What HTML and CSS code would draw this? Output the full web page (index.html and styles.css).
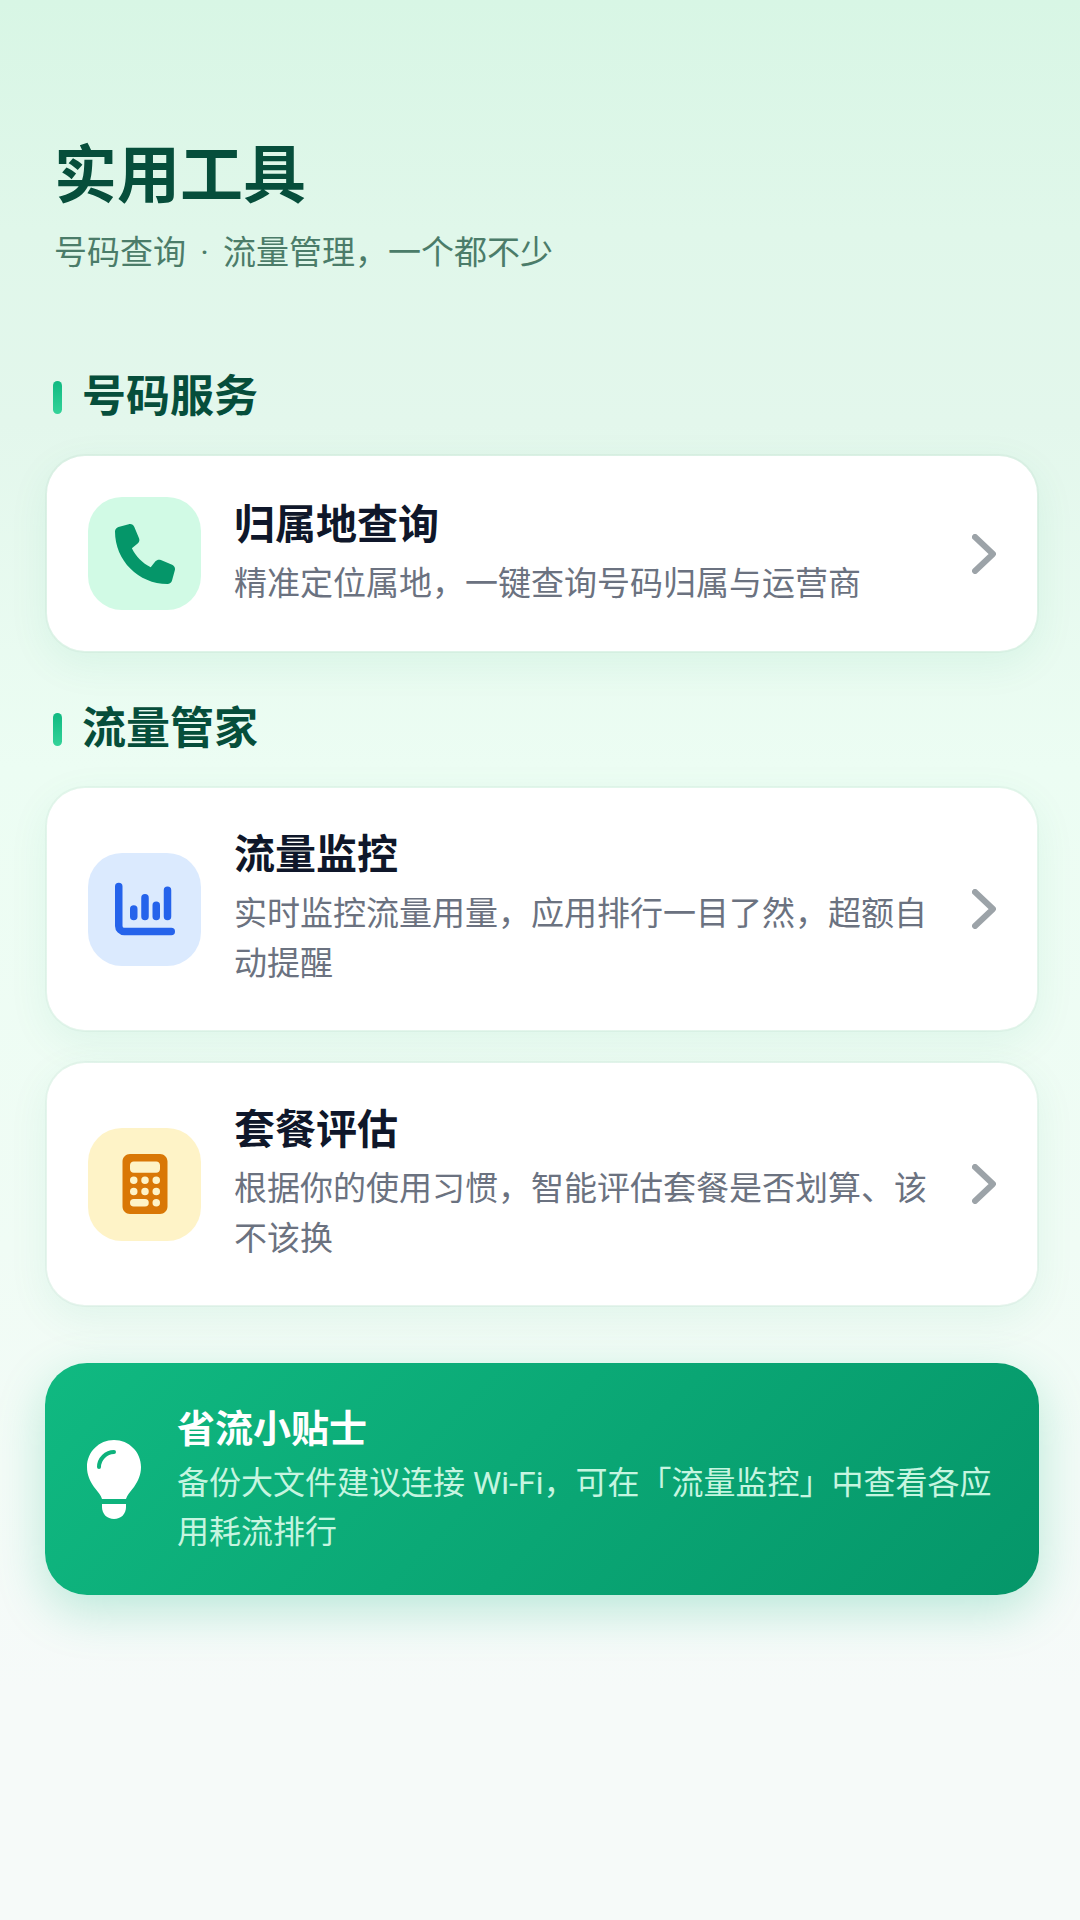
FILE: index.html
```html
<!DOCTYPE html>
<html lang="zh-CN">
<head>
  <meta charset="UTF-8" />
  <meta name="viewport" content="width=device-width, initial-scale=1.0" />
  <title>实用工具</title>
  <link rel="stylesheet" href="styles.css">
</head>
<body>
  <main class="page">
    <header class="page-header">
      <h1>实用工具</h1>
      <p>号码查询 <span class="dot">·</span> 流量管理，一个都不少</p>
    </header>

    <section class="group">
      <h2>号码服务</h2>
      <a class="card" href="#location">
        <span class="card-icon green">
          <svg viewBox="0 0 512 512" fill="currentColor" aria-hidden="true">
            <path d="M164.900 24.600c-7.700-18.600-28-28.500-47.400-23.200l-88 24C12.100 30.200 0 46 0 64c0 247.400 200.600 448 448 448 18 0 33.800-12.100 38.600-29.500l24-88c5.300-19.400-4.600-39.700-23.200-47.400l-96-40c-16.300-6.800-35.200-2.100-46.300 11.600L304.700 368C234.300 334.700 177.300 277.700 144 207.300L193.300 167c13.700-11.200 18.400-30 11.600-46.300l-40-96z"/>
          </svg>
        </span>
        <span class="card-text">
          <strong>归属地查询</strong>
          <span>精准定位属地，一键查询号码归属与运营商</span>
        </span>
        <svg class="arrow" viewBox="0 0 24 40" aria-hidden="true"><path d="M3 3l18 17L3 37"/></svg>
      </a>
    </section>

    <section class="group">
      <h2>流量管家</h2>
      <a class="card" href="#monitor">
        <span class="card-icon blue">
          <svg viewBox="0 0 512 512" fill="none" stroke="currentColor" stroke-width="64" stroke-linecap="round" aria-hidden="true">
            <path d="M32 64v336c0 26 22 48 48 48h400"/>
            <path d="M160 256v64M256 160v160M352 224v96M448 96v224"/>
          </svg>
        </span>
        <span class="card-text">
          <strong>流量监控</strong>
          <span>实时监控流量用量，应用排行一目了然，超额自动提醒</span>
        </span>
        <svg class="arrow" viewBox="0 0 24 40" aria-hidden="true"><path d="M3 3l18 17L3 37"/></svg>
      </a>
      <a class="card" href="#plan">
        <span class="card-icon amber">
          <svg viewBox="0 0 512 512" fill="currentColor" aria-hidden="true">
            <path fill-rule="evenodd" d="M128 0h256c35 0 64 29 64 64v384c0 35-29 64-64 64H128c-35 0-64-29-64-64V64c0-35 29-64 64-64zM160 64c-18 0-32 14-32 32v32c0 18 14 32 32 32h192c18 0 32-14 32-32V96c0-18-14-32-32-32zM160 192a32 32 0 1 0 0 64 32 32 0 1 0 0-64zM256 192a32 32 0 1 0 0 64 32 32 0 1 0 0-64zM352 192a32 32 0 1 0 0 64 32 32 0 1 0 0-64zM160 288a32 32 0 1 0 0 64 32 32 0 1 0 0-64zM256 288a32 32 0 1 0 0 64 32 32 0 1 0 0-64zM352 288a32 32 0 1 0 0 64 32 32 0 1 0 0-64zM352 384a32 32 0 1 0 0 64 32 32 0 1 0 0-64zM160 384a32 32 0 0 0 0 64h96a32 32 0 0 0 0-64z"/>
          </svg>
        </span>
        <span class="card-text">
          <strong>套餐评估</strong>
          <span>根据你的使用习惯，智能评估套餐是否划算、该不该换</span>
        </span>
        <svg class="arrow" viewBox="0 0 24 40" aria-hidden="true"><path d="M3 3l18 17L3 37"/></svg>
      </a>
    </section>

    <aside class="tip">
      <svg class="bulb" viewBox="0 0 54 79" aria-hidden="true">
        <path fill="#fff" d="M27 0C12 0 0 12 0 27c0 8 3 14 7 20 4 5 7 8 8 12h24c1-4 4-7 8-12 4-6 7-12 7-20C54 12 42 0 27 0z"/>
        <path fill="#fff" d="M15 64h24v3c0 7-5 12-12 12s-12-5-12-12z"/>
        <path fill="none" stroke="#0db27c" stroke-width="4" stroke-linecap="round" d="M12 27c0-8 7-15 15-15"/>
      </svg>
      <div class="tip-text">
        <strong>省流小贴士</strong>
        <p>备份大文件建议连接 Wi-Fi，可在「流量监控」中查看各应用耗流排行</p>
      </div>
    </aside>
  </main>
</body>
</html>
```
FILE: styles.css
```css
* {
  box-sizing: border-box;
}
body {
  margin: 0;
  min-height: 100vh;
  font-family: Roboto, "Noto Sans CJK SC", sans-serif;
  background: linear-gradient(180deg, #d8f6e5 0%, #e0f7ea 12%, #e3f7ec 22%, #ecfdf3 40%, #f0fcf5 65%, #f6faf9 88%);
}
h1, h2, p {
  margin: 0;
}
.page {
  padding: 140px 41px 60px 45px;
}
.page-header {
  padding-left: 9px;
}
.page-header h1 {
  font-size: 63px;
  line-height: 72px;
  color: #064e3b;
}
.page-header p {
  margin-top: 16px;
  font-size: 33px;
  line-height: 50px;
  color: #4b7c69;
}
.dot {
  margin: 0 6px;
}
.group {
  margin-top: 46px;
}
.page-header + .group {
  margin-top: 89px;
}
.group h2 {
  display: flex;
  align-items: center;
  gap: 20px;
  margin-bottom: 27px;
  padding-left: 8px;
  font-size: 44px;
  line-height: 60px;
  color: #064e3b;
}
.group h2::before {
  content: "";
  width: 9px;
  height: 33px;
  border-radius: 5px;
  background: linear-gradient(180deg, #10b981, #34d399);
}
/* Tool cards */
.card {
  display: flex;
  align-items: center;
  gap: 33px;
  padding: 41px;
  background: #fff;
  background-clip: padding-box;
  border: 2px solid rgba(6, 78, 59, 0.04);
  border-radius: 40px;
  box-shadow: 0 12px 40px rgba(5, 150, 105, 0.07);
  text-decoration: none;
}
.card + .card {
  margin-top: 29px;
}
.card-icon {
  display: flex;
  flex: none;
  align-items: center;
  justify-content: center;
  width: 113px;
  height: 113px;
  border-radius: 34px;
}
.card-icon svg {
  width: 60px;
  height: 60px;
}
.green {
  background: #d1fae5;
  color: #059669;
}
.blue {
  background: #dbeafe;
  color: #2563eb;
}
.amber {
  background: #fef3c7;
  color: #d97706;
}
.card-text {
  flex: 1;
}
.card-text strong {
  display: block;
  margin-bottom: 8px;
  font-size: 41px;
  font-weight: 700;
  line-height: 52px;
  color: #0f172a;
}
.card-text span {
  display: block;
  font-size: 33px;
  line-height: 50px;
  color: #6b7280;
}
.arrow {
  flex: none;
  width: 24px;
  height: 40px;
  fill: none;
  stroke: #9ca3a8;
  stroke-width: 6;
  stroke-linecap: round;
  stroke-linejoin: round;
}
/* Bottom tip */
.tip {
  display: flex;
  align-items: center;
  gap: 36px;
  margin-top: 56px;
  padding: 38px 40px 38px 42px;
  border-radius: 42px;
  background: linear-gradient(135deg, #10b981, #059669);
  box-shadow: 0 16px 48px rgba(16, 185, 129, 0.25);
  color: #fff;
}
.bulb {
  flex: none;
  width: 54px;
  height: 79px;
}
.tip-text strong {
  display: block;
  font-size: 38px;
  line-height: 56px;
}
.tip-text p {
  margin-top: 2px;
  font-size: 32px;
  line-height: 49px;
  color: #c6f5e0;
}
```
